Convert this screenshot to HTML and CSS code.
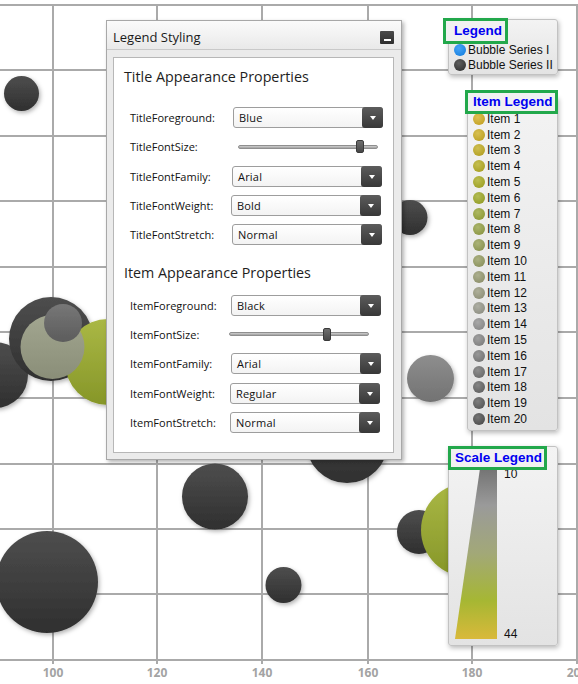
FILE: index.html
```html
<!DOCTYPE html>
<html lang="en">
<head>
<meta charset="utf-8">
<title>Legend Styling</title>
<link rel="stylesheet" href="styles.css">
</head>
<body>
<div class="stage">
  <svg class="chart" width="578" height="684" viewBox="0 0 578 684" xmlns="http://www.w3.org/2000/svg">
    <defs>
      <linearGradient id="gDark" x1="0" y1="0" x2="0" y2="1">
        <stop offset="0" stop-color="#4e4e4e"/><stop offset="1" stop-color="#2f2f2f"/>
      </linearGradient>
      <linearGradient id="gGreen" x1="0" y1="0" x2="0" y2="1">
        <stop offset="0" stop-color="#aab845"/><stop offset="1" stop-color="#869628"/>
      </linearGradient>
      <linearGradient id="gSage" x1="0" y1="0" x2="0" y2="1">
        <stop offset="0" stop-color="#a2a690"/><stop offset="1" stop-color="#8a8e78"/>
      </linearGradient>
      <linearGradient id="gGray" x1="0" y1="0" x2="0" y2="1">
        <stop offset="0" stop-color="#777777"/><stop offset="1" stop-color="#5c5c5c"/>
      </linearGradient>
      <linearGradient id="gMid" x1="0" y1="0" x2="0" y2="1">
        <stop offset="0" stop-color="#8e8e8e"/><stop offset="1" stop-color="#727272"/>
      </linearGradient>
      <filter id="sh" x="-30%" y="-30%" width="160%" height="160%">
        <feDropShadow dx="1.5" dy="2" stdDeviation="2" flood-color="#000" flood-opacity="0.3"/>
      </filter>
    </defs>
    <g class="grid" stroke="#aaaaaa" stroke-width="2">
      <line x1="0" y1="5" x2="578" y2="5"/>
      <line x1="0" y1="70" x2="578" y2="70"/>
      <line x1="0" y1="136" x2="578" y2="136"/>
      <line x1="0" y1="201" x2="578" y2="201"/>
      <line x1="0" y1="267" x2="578" y2="267"/>
      <line x1="0" y1="332" x2="578" y2="332"/>
      <line x1="0" y1="398" x2="578" y2="398"/>
      <line x1="0" y1="464" x2="578" y2="464"/>
      <line x1="0" y1="529" x2="578" y2="529"/>
      <line x1="0" y1="594" x2="578" y2="594"/>
      <line x1="0" y1="660" x2="578" y2="660"/>
      <line x1="53" y1="5" x2="53" y2="664"/>
      <line x1="157" y1="5" x2="157" y2="664"/>
      <line x1="262" y1="5" x2="262" y2="664"/>
      <line x1="368" y1="5" x2="368" y2="664"/>
      <line x1="472" y1="5" x2="472" y2="664"/>
      <line x1="577" y1="5" x2="577" y2="664"/>
    </g>
    <g class="axis">
      <text x="53" y="677">100</text>
      <text x="157" y="677">120</text>
      <text x="262" y="677">140</text>
      <text x="368" y="677">160</text>
      <text x="472" y="677">180</text>
      <text x="577" y="677">200</text>
    </g>
    <g filter="url(#sh)">
      <circle cx="21.5" cy="93.5" r="17.5" fill="url(#gDark)"/>
      <circle cx="410" cy="217.5" r="17.5" fill="url(#gDark)"/>
      <circle cx="-5" cy="375" r="33" fill="url(#gDark)"/>
      <circle cx="51" cy="339" r="42" fill="url(#gDark)"/>
      <circle cx="108" cy="362" r="43" fill="url(#gGreen)"/>
      <circle cx="52.5" cy="347" r="32" fill="url(#gSage)"/>
      <circle cx="63" cy="323" r="19" fill="url(#gGray)"/>
      <circle cx="430.5" cy="378.5" r="23.5" fill="url(#gMid)"/>
      <circle cx="347" cy="442" r="41" fill="url(#gDark)"/>
      <circle cx="215" cy="496.5" r="33" fill="url(#gDark)"/>
      <circle cx="419" cy="532" r="22" fill="url(#gDark)"/>
      <circle cx="468" cy="530" r="47" fill="url(#gGreen)"/>
      <circle cx="283.5" cy="585" r="18" fill="url(#gDark)"/>
      <circle cx="47" cy="582" r="51" fill="url(#gDark)"/>
    </g>
  </svg>

  <section class="panel">
    <header class="panel-head">
      <span class="panel-title">Legend Styling</span>
      <span class="min-btn"><span class="min-bar"></span></span>
    </header>
    <div class="panel-body">
      <div class="inner">
        <h2 class="sec-title">Title Appearance Properties</h2>
        <div class="rows rows-title">
          <span class="lbl">TitleForeground:</span>
          <div class="combo nudge-r"><span class="val">Blue</span><span class="drop"><span class="tri"></span></span></div>
          <span class="lbl">TitleFontSize:</span>
          <div class="slider slider-title"><span class="track"></span><span class="thumb"></span></div>
          <span class="lbl">TitleFontFamily:</span>
          <div class="combo"><span class="val">Arial</span><span class="drop"><span class="tri"></span></span></div>
          <span class="lbl">TitleFontWeight:</span>
          <div class="combo nudge-l1"><span class="val">Bold</span><span class="drop"><span class="tri"></span></span></div>
          <span class="lbl">TitleFontStretch:</span>
          <div class="combo"><span class="val">Normal</span><span class="drop"><span class="tri"></span></span></div>
        </div>
        <h2 class="sec-title sec-item">Item Appearance Properties</h2>
        <div class="rows rows-item">
          <span class="lbl">ItemForeground:</span>
          <div class="combo nudge-l1"><span class="val">Black</span><span class="drop"><span class="tri"></span></span></div>
          <span class="lbl">ItemFontSize:</span>
          <div class="slider slider-item"><span class="track"></span><span class="thumb"></span></div>
          <span class="lbl">ItemFontFamily:</span>
          <div class="combo nudge-l1"><span class="val">Arial</span><span class="drop"><span class="tri"></span></span></div>
          <span class="lbl">ItemFontWeight:</span>
          <div class="combo nudge-l2"><span class="val">Regular</span><span class="drop"><span class="tri"></span></span></div>
          <span class="lbl">ItemFontStretch:</span>
          <div class="combo nudge-l2"><span class="val">Normal</span><span class="drop"><span class="tri"></span></span></div>
        </div>
      </div>
    </div>
  </section>

  <aside class="legend legend-series">
    <div class="lg-title t-series">Legend</div>
    <ul class="lg-list">
      <li><span class="dot" style="--c:#1e8ff5"></span>Bubble Series I</li>
      <li><span class="dot" style="--c:#3c3c3c"></span>Bubble Series II</li>
    </ul>
  </aside>

  <aside class="legend legend-items">
    <div class="lg-title t-items">Item Legend</div>
    <ul class="lg-list items">
      <li><span class="dot" style="--c:#d6b22c"></span>Item 1</li>
      <li><span class="dot" style="--c:#cfb22b"></span>Item 2</li>
      <li><span class="dot" style="--c:#c4b02a"></span>Item 3</li>
      <li><span class="dot" style="--c:#b8b02a"></span>Item 4</li>
      <li><span class="dot" style="--c:#adb02b"></span>Item 5</li>
      <li><span class="dot" style="--c:#a2ad2e"></span>Item 6</li>
      <li><span class="dot" style="--c:#9ca93f"></span>Item 7</li>
      <li><span class="dot" style="--c:#99a54c"></span>Item 8</li>
      <li><span class="dot" style="--c:#98a25a"></span>Item 9</li>
      <li><span class="dot" style="--c:#99a067"></span>Item 10</li>
      <li><span class="dot" style="--c:#9b9e76"></span>Item 11</li>
      <li><span class="dot" style="--c:#9d9e84"></span>Item 12</li>
      <li><span class="dot" style="--c:#9c9d90"></span>Item 13</li>
      <li><span class="dot" style="--c:#959595"></span>Item 14</li>
      <li><span class="dot" style="--c:#8b8b8b"></span>Item 15</li>
      <li><span class="dot" style="--c:#818181"></span>Item 16</li>
      <li><span class="dot" style="--c:#767676"></span>Item 17</li>
      <li><span class="dot" style="--c:#6b6b6b"></span>Item 18</li>
      <li><span class="dot" style="--c:#616161"></span>Item 19</li>
      <li><span class="dot" style="--c:#565656"></span>Item 20</li>
    </ul>
  </aside>

  <aside class="legend legend-scale">
    <div class="lg-title t-scale">Scale Legend</div>
    <div class="scale-body">
      <svg class="wedge" width="44" height="192" viewBox="0 0 44 192" xmlns="http://www.w3.org/2000/svg">
        <defs>
          <linearGradient id="gScale" x1="0" y1="0" x2="0" y2="1">
            <stop offset="0" stop-color="#5e5e5e"/>
            <stop offset="0.3" stop-color="#9a9a9a"/>
            <stop offset="0.55" stop-color="#a2a878"/>
            <stop offset="0.8" stop-color="#a6b733"/>
            <stop offset="1" stop-color="#d9b93a"/>
          </linearGradient>
        </defs>
        <polygon points="28,0 42,0 42,191 0,191" fill="url(#gScale)"/>
      </svg>
      <div class="scale-labels">
        <span>10</span>
        <span>44</span>
      </div>
    </div>
  </aside>
</div>
</body>
</html>
```
FILE: styles.css
```css
* { box-sizing: border-box; }
html, body { margin: 0; padding: 0; background: #fff; }
body { width: 578px; height: 684px; overflow: hidden; }

.stage { position: relative; width: 578px; height: 684px; }
.chart { display: block; }
.axis text {
  font-family: "Open Sans", "Noto Sans", sans-serif;
  font-size: 12px;
  font-weight: 700;
  fill: #a3a3a3;
  text-anchor: middle;
}

/* ---------- Styling panel ---------- */
.panel {
  position: absolute;
  left: 106px;
  top: 20px;
  width: 296px;
  height: 440px;
  border: 1px solid #a8a8a8;
  background: #ebebeb;
  box-shadow: 2px 2px 4px rgba(0,0,0,0.3);
  display: flex;
  flex-direction: column;
  font-family: "Open Sans", "Noto Sans", sans-serif;
  color: #1a1a1a;
}
.panel-head {
  height: 29px;
  border-bottom: 1px solid #c9c9c9;
  background: linear-gradient(#fbfbfb, #e9e9e9);
  display: flex;
  align-items: center;
  padding: 3px 7px 0 6px;
}
.panel-title { font-size: 13px; flex: 1; }
.min-btn {
  width: 14px;
  height: 13px;
  margin-top: 2px;
  background: linear-gradient(#4a4a4a, #2e2e2e);
  border-radius: 1px;
  display: flex;
  justify-content: center;
  align-items: flex-end;
  padding-bottom: 3px;
}
.min-bar { width: 7px; height: 2px; background: #fff; }

.panel-body { flex: 1; padding: 7px 7px 6px 6px; }
.inner {
  height: 100%;
  background: #fff;
  border: 1px solid #b7b7b7;
  padding: 9px 10px 0 10px;
}
.sec-title {
  margin: 0;
  font-size: 14.3px;
  font-weight: 400;
  line-height: 20px;
  color: #1e1e1e;
}
.sec-item { margin-top: 14px; }

.rows {
  display: grid;
  grid-template-columns: 102px 150px;
  grid-auto-rows: 29.3px;
  align-items: center;
  margin-left: 6px;
}
.rows-title { margin-top: 16px; }
.rows-item { margin-top: 7px; }
.lbl { font-size: 11px; white-space: nowrap; color: #111; }

.combo {
  height: 21px;
  width: 150px;
  border: 1px solid #9d9d9d;
  border-radius: 3px;
  background: linear-gradient(#ffffff, #f3f3f3);
  display: flex;
  align-items: center;
  padding-left: 5px;
  font-size: 11px;
  letter-spacing: 0.2px;
  color: #111;
}
.nudge-r { margin-left: 1px; }
.nudge-l1 { margin-left: -1px; }
.nudge-l2 { margin-left: -2px; }
.val { flex: 1; }
.drop {
  width: 21px;
  height: 21px;
  margin: -1px -1px -1px 0;
  border-radius: 3px;
  background: linear-gradient(#5c5c5c, #383838);
  display: flex;
  align-items: center;
  justify-content: center;
}
.tri {
  width: 0;
  height: 0;
  border-left: 3.5px solid transparent;
  border-right: 3.5px solid transparent;
  border-top: 4px solid #fff;
  margin-top: 1px;
}

.slider {
  position: relative;
  height: 13px;
  display: flex;
  align-items: center;
}
.slider-title { margin-left: 6px; }
.slider-item { margin-left: -3px; }
.track {
  width: 140px;
  height: 4px;
  border-radius: 2px;
  border: 1px solid #8f8f8f;
  background: linear-gradient(#cfcfcf, #a0a0a0);
}
.thumb {
  position: absolute;
  top: 0;
  width: 8px;
  height: 13px;
  border-radius: 2px;
  border: 1px solid #3a3a3a;
  background: linear-gradient(#6e6e6e, #474747);
}
.slider-title .thumb { left: 118px; }
.slider-item .thumb { left: 94px; }

/* ---------- Legends ---------- */
.legend {
  position: absolute;
  border: 1px solid #c2c2c2;
  border-radius: 3px;
  background: linear-gradient(#f3f3f3, #e3e3e3);
  box-shadow: 1px 2px 5px rgba(0,0,0,0.28);
  font-family: "Liberation Sans", Arial, sans-serif;
  color: #111;
}
.lg-title {
  position: relative;
  z-index: 1;
  border: 3px solid #22a84b;
  height: 26px;
  line-height: 20px;
  font-size: 13.5px;
  font-weight: 700;
  color: #0000f0;
  white-space: nowrap;
  background: #f1f1f1;
}
.lg-list { list-style: none; margin: 0; padding: 0; }
.lg-list li {
  display: flex;
  align-items: center;
  height: 15px;
  font-size: 12px;
  white-space: nowrap;
}
.dot {
  width: 12px;
  height: 12px;
  border-radius: 50%;
  background: radial-gradient(circle at 40% 35%, rgba(255,255,255,0.18), rgba(0,0,0,0.08) 75%), var(--c);
  margin-right: 2px;
  flex: none;
}

.legend-series { left: 448px; top: 19px; width: 110px; height: 56px; }
.t-series { width: 65px; margin: -2px 0 0 -6px; padding-left: 8px; }
.legend-series .lg-list { padding-left: 5px; margin-top: -2px; }
.legend-series li { height: 15px; }

.legend-items { left: 467px; top: 96px; width: 91px; height: 335px; }
.t-items { width: 93px; margin: -7px 0 0 -3px; height: 24px; line-height: 18px; padding-left: 5px; }
.items { padding-left: 5px; margin-top: -3px; }
.items li { height: 15.8px; }
.items .dot { margin-right: 2px; }

.legend-scale { left: 448px; top: 446px; width: 110px; height: 200px; }
.t-scale { width: 99px; margin: -1px 0 0 -1px; height: 24px; line-height: 18px; padding-left: 4px; }
.scale-body { display: flex; margin-top: -23px; padding-left: 6px; }
.wedge { display: block; margin-top: 1px; }
.scale-labels {
  display: flex;
  flex-direction: column;
  justify-content: space-between;
  font-size: 12px;
  padding: 20px 0 0 5px;
  height: 194px;
  line-height: 14px;
}
```
